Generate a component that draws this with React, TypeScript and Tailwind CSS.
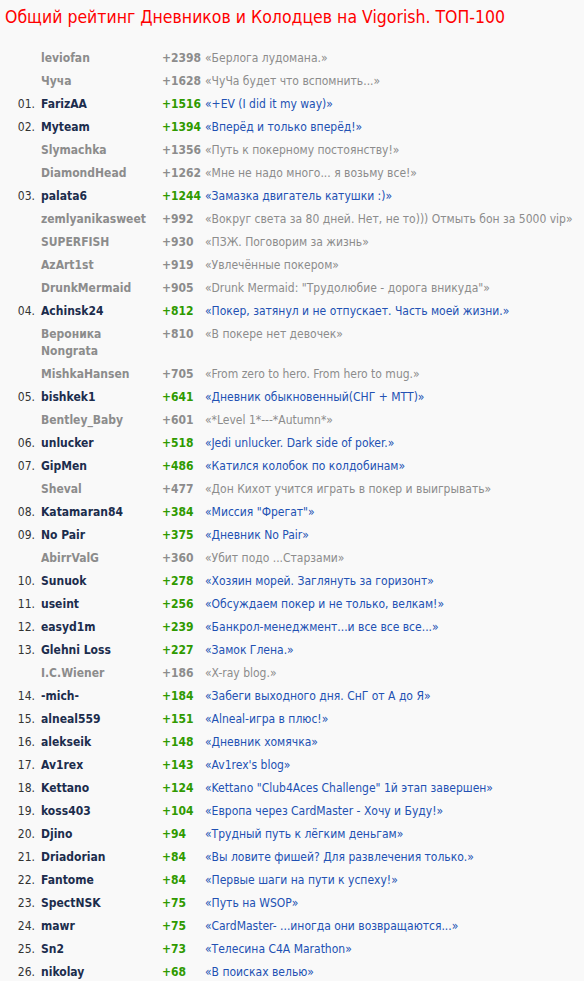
import React from "react";

type Row = { r?: string; n: string; s: string; q: string };

const rows: Row[] = [
  { n: "leviofan", s: "+2398", q: "«Берлога лудомана.»" },
  { n: "Чуча", s: "+1628", q: "«ЧуЧа будет что вспомнить...»" },
  { r: "01.", n: "FarizAA", s: "+1516", q: "«+EV (I did it my way)»" },
  { r: "02.", n: "Myteam", s: "+1394", q: "«Вперёд и только вперёд!»" },
  { n: "Slymachka", s: "+1356", q: "«Путь к покерному постоянству!»" },
  { n: "DiamondHead", s: "+1262", q: "«Мне не надо много... я возьму все!»" },
  { r: "03.", n: "palata6", s: "+1244", q: "«Замазка двигатель катушки :)»" },
  { n: "zemlyanikasweet", s: "+992", q: "«Вокруг света за 80 дней. Нет, не то))) Отмыть бон за 5000 vip»" },
  { n: "SUPERFISH", s: "+930", q: "«ПЗЖ. Поговорим за жизнь»" },
  { n: "AzArt1st", s: "+919", q: "«Увлечённые покером»" },
  { n: "DrunkMermaid", s: "+905", q: "«Drunk Mermaid: \"Трудолюбие - дорога вникуда\"»" },
  { r: "04.", n: "Achinsk24", s: "+812", q: "«Покер, затянул и не отпускает. Часть моей жизни.»" },
  { n: "Вероника Nongrata", s: "+810", q: "«В покере нет девочек»" },
  { n: "MishkaHansen", s: "+705", q: "«From zero to hero. From hero to mug.»" },
  { r: "05.", n: "bishkek1", s: "+641", q: "«Дневник обыкновенный(СНГ + МТТ)»" },
  { n: "Bentley_Baby", s: "+601", q: "«*Level 1*---*Autumn*»" },
  { r: "06.", n: "unlucker", s: "+518", q: "«Jedi unlucker. Dark side of poker.»" },
  { r: "07.", n: "GipMen", s: "+486", q: "«Катился колобок по колдобинам»" },
  { n: "Sheval", s: "+477", q: "«Дон Кихот учится играть в покер и выигрывать»" },
  { r: "08.", n: "Katamaran84", s: "+384", q: "«Миссия \"Фрегат\"»" },
  { r: "09.", n: "No Pair", s: "+375", q: "«Дневник No Pair»" },
  { n: "AbirrValG", s: "+360", q: "«Убит подо ...Старзами»" },
  { r: "10.", n: "Sunuok", s: "+278", q: "«Хозяин морей. Заглянуть за горизонт»" },
  { r: "11.", n: "useint", s: "+256", q: "«Обсуждаем покер и не только, велкам!»" },
  { r: "12.", n: "easyd1m", s: "+239", q: "«Банкрол-менеджмент...и все все все...»" },
  { r: "13.", n: "Glehni Loss", s: "+227", q: "«Замок Глена.»" },
  { n: "I.C.Wiener", s: "+186", q: "«X-ray blog.»" },
  { r: "14.", n: "-mich-", s: "+184", q: "«Забеги выходного дня. СнГ от А до Я»" },
  { r: "15.", n: "alneal559", s: "+151", q: "«Alneal-игра в плюс!»" },
  { r: "16.", n: "alekseik", s: "+148", q: "«Дневник хомячка»" },
  { r: "17.", n: "Av1rex", s: "+143", q: "«Av1rex's blog»" },
  { r: "18.", n: "Kettano", s: "+124", q: "«Kettano \"Club4Aces Challenge\" 1й этап завершен»" },
  { r: "19.", n: "koss403", s: "+104", q: "«Европа через CardMaster - Хочу и Буду!»" },
  { r: "20.", n: "Djino", s: "+94", q: "«Трудный путь к лёгким деньгам»" },
  { r: "21.", n: "Driadorian", s: "+84", q: "«Вы ловите фишей? Для развлечения только.»" },
  { r: "22.", n: "Fantome", s: "+84", q: "«Первые шаги на пути к успеху!»" },
  { r: "23.", n: "SpectNSK", s: "+75", q: "«Путь на WSOP»" },
  { r: "24.", n: "mawr", s: "+75", q: "«CardMaster- ...иногда они возвращаются...»" },
  { r: "25.", n: "Sn2", s: "+73", q: "«Телесина C4A Marathon»" },
  { r: "26.", n: "nikolay", s: "+68", q: "«В поисках велью»" },
];

export default function App() {
  return (
    <div
      className="min-h-[981px] w-[584px] bg-[#f9f9f9] overflow-hidden"
      style={{ fontFamily: '"DejaVu Sans Condensed", "DejaVu Sans", sans-serif' }}
    >
      <h1 className="pl-[5px] pt-[6px] text-[17.5px] leading-[22px] text-[#ff0000] font-normal">
        Общий рейтинг Дневников и Колодцев на Vigorish. ТОП-100
      </h1>
      <div className="mt-[19px] grid grid-cols-[38px_121px_43px_1fr] text-[12px] leading-[17px]">
        {rows.map((row, i) => {
          const on = !!row.r;
          return (
            <React.Fragment key={i}>
              <div className="py-[3px] pr-[3px] text-right text-[#333333]">{row.r ?? ""}</div>
              <div className={`py-[3px] pl-[3px] font-bold ${on ? "text-[#1c2d4d]" : "text-[#8c8c8c]"}`}>{row.n}</div>
              <div className={`py-[3px] pl-[3px] font-bold ${on ? "text-[#2f9a00]" : "text-[#8c8c8c]"}`}>{row.s}</div>
              <div className={`py-[3px] pl-[3px] whitespace-nowrap ${on ? "text-[#2251b3]" : "text-[#8c8c8c]"}`}>{row.q}</div>
            </React.Fragment>
          );
        })}
      </div>
    </div>
  );
}
